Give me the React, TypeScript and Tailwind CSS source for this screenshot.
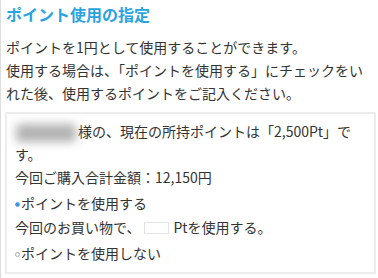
import React from "react";

export default function App() {
  const font = { fontFamily: '"Noto Sans CJK JP", "Noto Sans", sans-serif' };
  return (
    <div
      className="w-[378px] h-[278px] bg-white border-l border-[#dddddd] pl-[3px] pr-[3px] text-[#333333] overflow-hidden"
      style={font}
    >
      <h2 className="pl-[2px] pt-[3px] text-[16px] leading-[22px] font-bold text-[#2aa3df]">
        ポイント使用の指定
      </h2>
      <p className="pl-[2px] mt-[11px] text-[14px] leading-[23px]">
        ポイントを1円として使用することができます。
        <br />
        使用する場合は、「ポイントを使用する」にチェックをいれた後、使用するポイントをご記入ください。
      </p>
      <div className="mt-[7px] ml-[1px] w-[371px] h-[162px] border-2 border-[#ededed] pl-[8px] pr-[6px] pt-[6px] text-[14px] leading-[23px]">
        <p>
          <span className="inline-block bg-[#a0a0a0] blur-[5px] rounded-[4px] w-[60px] h-[18px] align-middle opacity-80 ml-[1px] mr-[2px]"></span>
          様の、現在の所持ポイントは「2,500Pt」です。
        </p>
        <p>今回ご購入合計金額：12,150円</p>
        <label className="flex items-center mt-[3px]">
          <span className="inline-block w-[5px] h-[5px] rounded-full bg-[#3d8edb] border border-[#6aa8e4] mr-[1px] mt-[2px]"></span>
          ポイントを使用する
        </label>
        <p className="flex items-center mt-[1px]">
          今回のお買い物で、
          <span className="inline-block w-[25px] h-[12px] border border-[#e2e2e2] bg-white mx-[4px]"></span>
          Ptを使用する。
        </p>
        <label className="flex items-center mt-[3px]">
          <span className="inline-block w-[5px] h-[5px] rounded-full bg-white border border-[#aaaaaa] mr-[1px] mt-[2px]"></span>
          ポイントを使用しない
        </label>
      </div>
    </div>
  );
}
